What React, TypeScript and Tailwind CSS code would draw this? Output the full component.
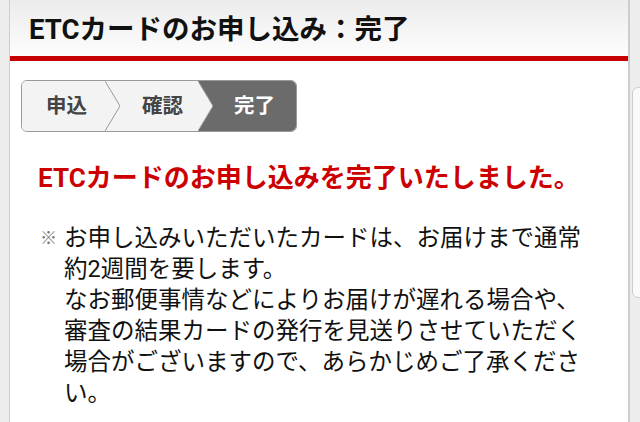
import React from "react";

const font = { fontFamily: 'Roboto, "Noto Sans CJK JP", sans-serif' };

function Chevron({ dark }: { dark?: boolean }) {
  return (
    <svg width="15" height="50" viewBox="0 0 15 50" preserveAspectRatio="none" className="block shrink-0 h-full">
      <rect x="0" y="0" width="15" height="50" fill="#f3f3f3" />
      {dark && <polygon points="0,0 15,0 15,50 0,50 15,25" fill="#6b6b6b" />}
      <polyline points="0,0 15,25 0,50" fill="none" stroke="#9a9a9a" strokeWidth="1" />
    </svg>
  );
}

export default function App() {
  const lines = [
    "約2週間を要します。",
    "なお郵便事情などによりお届けが遅れる場合や、",
    "審査の結果カードの発行を見送りさせていただく",
    "場合がございますので、あらかじめご了承くださ",
    "い。",
  ];
  return (
    <div className="w-[640px] h-[422px] overflow-hidden bg-[#ededed] flex" style={font}>
      <div className="w-[9px] shrink-0" />
      <div className="w-[621px] shrink-0 h-full bg-white border-l border-r-2 border-[#cdcdcd] flex flex-col">
        <div className="h-[56px] shrink-0 flex items-center pl-[19px] pt-[3px] bg-gradient-to-b from-[#ececec] to-[#fdfdfd]">
          <span className="text-[27.5px] font-bold text-[#111] leading-none">ETCカードのお申し込み：完了</span>
        </div>
        <div className="h-[5px] shrink-0 bg-[#c80000]" />
        <div className="ml-[11px] mt-[19px] h-[52px] w-[276px] shrink-0 flex border border-[#9a9a9a] rounded-[6px] overflow-hidden">
          <div className="w-[83px] h-full bg-[#f3f3f3] flex items-center pl-[24px]">
            <span className="text-[20.5px] font-bold text-[#444] leading-none">申込</span>
          </div>
          <Chevron />
          <div className="w-[78px] h-full bg-[#f3f3f3] flex items-center pl-[22px]">
            <span className="text-[20.5px] font-bold text-[#444] leading-none">確認</span>
          </div>
          <Chevron dark />
          <div className="flex-1 h-full bg-[#6b6b6b] flex items-center pl-[21px]">
            <span className="text-[20.5px] font-bold text-white leading-none">完了</span>
          </div>
        </div>
        <div className="mt-[30px] pl-[28px] text-[26px] leading-[32px] font-bold text-[#cc0000] whitespace-nowrap">
          ETCカードのお申し込みを完了いたしました。
        </div>
        <div className="mt-[29px] pl-[30px] flex text-[23.5px] leading-[31px] text-[#111]">
          <span className="w-[24px] shrink-0 text-[17px] text-[#777]">※</span>
          <div className="flex flex-col whitespace-nowrap">
            <span>お申し込みいただいたカードは、お届けまで通常</span>
            {lines.map((l) => (
              <span key={l}>{l}</span>
            ))}
          </div>
        </div>
      </div>
      <div className="ml-[2px] mt-[87px] h-[211px] w-[20px] shrink-0 rounded-l-[6px] border border-[#cdcdcd] bg-[#fafafa]" />
    </div>
  );
}
